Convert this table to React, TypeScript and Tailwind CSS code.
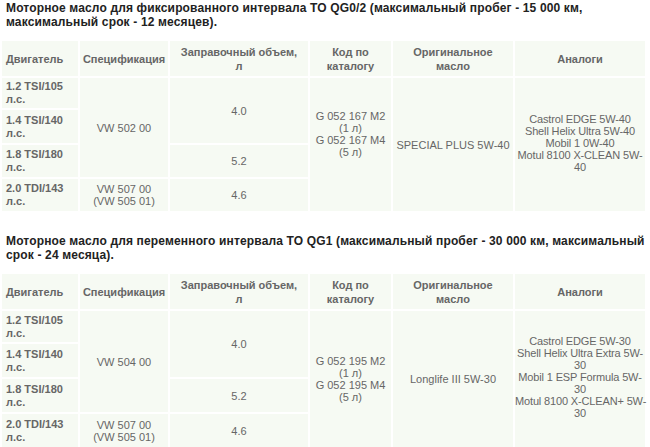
import React from 'react';

type Row = { engine: string[]; spec?: { text: string[]; span: number }; volume?: { text: string; span: number } };

type Block = {
  title: string[];
  rows: Row[];
  code: string[];
  codePad: string;
  oil: string;
  analogs: string[];
  rowHeights: string[];
};

const blocks: Block[] = [
  {
    title: [
      'Моторное масло для фиксированного интервала ТО QG0/2 (максимальный пробег - 15 000 км,',
      'максимальный срок - 12 месяцев).',
    ],
    rows: [
      { engine: ['1.2 TSI/105', 'л.с.'], spec: { text: ['VW 502 00'], span: 3 }, volume: { text: '4.0', span: 2 } },
      { engine: ['1.4 TSI/140', 'л.с.'] },
      { engine: ['1.8 TSI/180', 'л.с.'], volume: { text: '5.2', span: 1 } },
      { engine: ['2.0 TDI/143', 'л.с.'], spec: { text: ['VW 507 00', '(VW 505 01)'], span: 1 }, volume: { text: '4.6', span: 1 } },
    ],
    code: ['G 052 167 M2', '(1 л)', 'G 052 167 M4', '(5 л)'],
    codePad: 'pb-[22px]',
    oil: 'SPECIAL PLUS 5W-40',
    analogs: ['Castrol EDGE 5W-40', 'Shell Helix Ultra 5W-40', 'Mobil 1 0W-40', 'Motul 8100 X-CLEAN 5W-', '40'],
    rowHeights: ['h-[30px]', 'h-[33px]', 'h-[32px]', 'h-[32px]'],
  },
  {
    title: [
      'Моторное масло для переменного интервала ТО QG1 (максимальный пробег - 30 000 км, максимальный',
      'срок - 24 месяца).',
    ],
    rows: [
      { engine: ['1.2 TSI/105', 'л.с.'], spec: { text: ['VW 504 00'], span: 3 }, volume: { text: '4.0', span: 2 } },
      { engine: ['1.4 TSI/140', 'л.с.'] },
      { engine: ['1.8 TSI/180', 'л.с.'], volume: { text: '5.2', span: 1 } },
      { engine: ['2.0 TDI/143', 'л.с.'], spec: { text: ['VW 507 00', '(VW 505 01)'], span: 1 }, volume: { text: '4.6', span: 1 } },
    ],
    code: ['G 052 195 M2', '(1 л)', 'G 052 195 M4', '(5 л)'],
    codePad: 'pb-0',
    oil: 'Longlife III 5W-30',
    analogs: ['Castrol EDGE 5W-30', 'Shell Helix Ultra Extra 5W-', '30', 'Mobil 1 ESP Formula 5W-', '30', 'Motul 8100 X-CLEAN+ 5W-', '30'],
    rowHeights: ['h-[31px]', 'h-[33px]', 'h-[33px]', 'h-[33px]'],
  },
];

const headers = [
  { label: ['Двигатель'], align: 'text-left pl-[4px]' },
  { label: ['Спецификация'], align: 'text-center' },
  { label: ['Заправочный объем,', 'л'], align: 'text-center' },
  { label: ['Код по', 'каталогу'], align: 'text-center' },
  { label: ['Оригинальное', 'масло'], align: 'text-center' },
  { label: ['Аналоги'], align: 'text-center' },
];

const cell = 'bg-[#f6faf3] align-middle text-[#666] text-[11px] leading-[12px] whitespace-nowrap';

const Lines: React.FC<{ lines: string[] }> = ({ lines }) => (
  <>
    {lines.map((l, i) => (
      <React.Fragment key={i}>
        {i > 0 && <br />}
        {l}
      </React.Fragment>
    ))}
  </>
);

const OilTable: React.FC<{ block: Block; top: string }> = ({ block, top }) => (
  <section className={top}>
    <h2 className="pl-[6px] text-[12px] leading-[14px] tracking-[0.15px] font-bold text-[#222] whitespace-nowrap">
      <Lines lines={block.title} />
    </h2>
    <table className="mt-[10px] table-fixed border-separate border-spacing-[2px] w-[647px]">
      <colgroup>
        <col className="w-[76px]" />
        <col className="w-[88px]" />
        <col className="w-[138px]" />
        <col className="w-[81px]" />
        <col className="w-[120px]" />
        <col className="w-[130px]" />
      </colgroup>
      <thead>
        <tr className="h-[35px]">
          {headers.map((h, i) => (
            <th key={i} className={`${cell} ${h.align} font-bold text-[#555] leading-[14px]`}>
              <Lines lines={h.label} />
            </th>
          ))}
        </tr>
      </thead>
      <tbody>
        {block.rows.map((r, i) => (
          <tr key={i} className={block.rowHeights[i]}>
            <td className={`${cell} pl-[4px] font-bold leading-[13px] text-[9.5px] text-[#555]`}>
              <Lines lines={r.engine} />
            </td>
            {r.spec && (
              <td rowSpan={r.spec.span} className={`${cell} text-center`}>
                <Lines lines={r.spec.text} />
              </td>
            )}
            {r.volume && (
              <td rowSpan={r.volume.span} className={`${cell} text-center`}>
                {r.volume.text}
              </td>
            )}
            {i === 0 && (
              <>
                <td rowSpan={4} className={`${cell} text-center ${block.codePad}`}>
                  <Lines lines={block.code} />
                </td>
                <td rowSpan={4} className={`${cell} text-center`}>
                  {block.oil}
                </td>
                <td rowSpan={4} className={`${cell} text-center text-[10.5px] tracking-[-0.15px] leading-[12.4px] pb-[4px]`}>
                  <Lines lines={block.analogs} />
                </td>
              </>
            )}
          </tr>
        ))}
      </tbody>
    </table>
  </section>
);

export default function App() {
  return (
    <div className="w-[650px] h-[447px] overflow-hidden bg-white pt-[1px] font-['Liberation_Sans',Arial,sans-serif]">
      <OilTable block={blocks[0]} top="" />
      <OilTable block={blocks[1]} top="mt-[21px]" />
    </div>
  );
}
